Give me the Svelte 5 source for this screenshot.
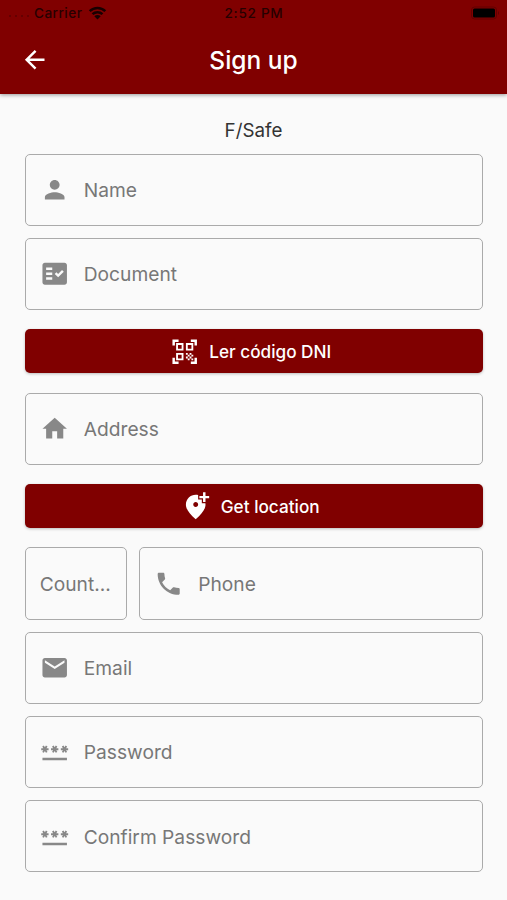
<script>
const icons = {
  back: 'M20 11H7.83l5.59-5.59L12 4l-8 8 8 8 1.41-1.41L7.83 13H20v-2z',
  person: 'M12 12c2.21 0 4-1.79 4-4s-1.79-4-4-4-4 1.79-4 4 1.79 4 4 4zm0 2c-2.67 0-8 1.34-8 4v2h16v-2c0-2.66-5.33-4-8-4z',
  document: 'M20 3H4c-1.1 0-2 .9-2 2v14c0 1.1.9 2 2 2h16c1.1 0 2-.9 2-2V5c0-1.1-.9-2-2-2zM10 17H5v-2h5v2zm0-4H5v-2h5v2zm0-4H5V7h5v2zm4.82 6L12 12.16l1.41-1.41 1.41 1.42L17.99 9l1.42 1.42L14.82 15z',
  home: 'M10 20v-6h4v6h5v-8h3L12 3 2 12h3v8z',
  phone: 'M6.62 10.79c1.44 2.83 3.76 5.14 6.59 6.59l2.2-2.2c.27-.27.67-.36 1.02-.24 1.12.37 2.33.57 3.57.57.55 0 1 .45 1 1V20c0 .55-.45 1-1 1-9.39 0-17-7.61-17-17 0-.55.45-1 1-1h3.5c.55 0 1 .45 1 1 0 1.25.2 2.45.57 3.57.11.35.03.74-.25 1.02l-2.2 2.2z',
  email: 'M20 4H4c-1.1 0-1.99.9-1.99 2L2 18c0 1.1.9 2 2 2h16c1.1 0 2-.9 2-2V6c0-1.1-.9-2-2-2zm0 4l-8 5-8-5V6l8 5 8-5v2z',
  password: 'M2 17h20v2H2v-2zm1.15-4.05L4 11.47l.85 1.48 1.3-.75-.85-1.48H7v-1.5H5.3l.85-1.47L4.85 7 4 8.47 3.15 7l-1.3.75.85 1.47H1v1.5h1.7l-.85 1.48 1.3.75zm6.7-.75l1.3.75.85-1.48.85 1.48 1.3-.75-.85-1.48H15v-1.5h-1.7l.85-1.47-1.3-.75L12 8.47 11.15 7l-1.3.75.85 1.47H9v1.5h1.7l-.85 1.48zM23 9.22h-1.7l.85-1.47-1.3-.75L20 8.47 19.15 7l-1.3.75.85 1.47H17v1.5h1.7l-.85 1.48 1.3.75.85-1.48.85 1.48 1.3-.75-.85-1.48H23v-1.5z',
  scanner: 'M9.5 6.5v3h-3v-3h3M11 5H5v6h6V5zm-1.5 9.5v3h-3v-3h3M11 13H5v6h6v-6zm6.5-6.5v3h-3v-3h3M19 5h-6v6h6V5zm-6 8h1.5v1.5H13V13zm1.5 1.5H16V16h-1.5v-1.5zM16 13h1.5v1.5H16V13zm-3 3h1.5v1.5H13V16zm1.5 1.5H16V19h-1.5v-1.5zM16 16h1.5v1.5H16V16zm1.5-1.5H19V16h-1.5v-1.5zm0 3H19V19h-1.5v-1.5zM22 7h-2V4h-3V2h5v5zm0 15v-5h-2v3h-3v2h5zM2 22h5v-2H4v-3H2v5zM2 2v5h2V4h3V2H2z',
  location: 'M20 1v3h3v2h-3v3h-2V6h-3V4h3V1h2zm-8 12c1.1 0 2-.9 2-2s-.9-2-2-2-2 .9-2 2 .9 2 2 2zm2-9.75V7h3v3h2.92c.05.4.08.79.08 1.2 0 3.32-2.67 7.25-8 11.8-5.33-4.55-8-8.48-8-11.8C4 6.22 7.8 3 12 3c.68 0 1.35.08 2 .25z',
};
</script>

{#snippet icon(name)}
  <svg class="icon" viewBox="0 0 24 24"><path d={icons[name]} /></svg>
{/snippet}

{#snippet field(label, name)}
  <div class="field">
    {#if name}
      {@render icon(name)}
    {/if}
    <span>{label}</span>
  </div>
{/snippet}

<header class="header">
  <div class="status">
    <div class="carrier">
      <svg class="signal" viewBox="0 0 22 4">
        <circle cx="2" cy="2" r="1" /><circle cx="8" cy="2" r="1" />
        <circle cx="14" cy="2" r="1" /><circle cx="20" cy="2" r="1" />
      </svg>
      <span>Carrier</span>
      <svg class="wifi" viewBox="0 0 18 14">
        <path d="M1.2 5.2a11.2 11.2 0 0 1 15.6 0M4 8.2a7.2 7.2 0 0 1 10 0" />
        <path class="dot" d="M9 13.6 5.8 10.3a4.6 4.6 0 0 1 6.4 0z" />
      </svg>
    </div>
    <span class="time">2:52 PM</span>
    <svg class="battery" viewBox="0 0 29 14">
      <rect class="shell" x=".5" y="1" width="25" height="12" rx="3" />
      <rect x="2" y="2.5" width="22" height="9" rx="1.5" />
      <path class="shell" d="M27.5 5.5v3" />
    </svg>
  </div>
  <div class="toolbar">
    {@render icon('back')}
    <h1>Sign up</h1>
  </div>
</header>

<main class="form">
  <p class="brand">F/Safe</p>
  {@render field('Name', 'person')}
  {@render field('Document', 'document')}
  <button class="action">{@render icon('scanner')}<span>Ler código DNI</span></button>
  {@render field('Address', 'home')}
  <button class="action">{@render icon('location')}<span>Get location</span></button>
  <div class="row">
    {@render field('Count...')}
    {@render field('Phone', 'phone')}
  </div>
  {@render field('Email', 'email')}
  {@render field('Password', 'password')}
  {@render field('Confirm Password', 'password')}
</main>

<style>
  :global(body) {
    margin: 0;
    background-color: #fafafa;
    font-family: Inter, "Liberation Sans", sans-serif;
  }

  .header {
    height: 93.5px;
    background-color: #800000;
    box-shadow: 0 1px 4px rgba(0, 0, 0, 0.4);
  }

  .status {
    display: grid;
    grid-template-columns: 1fr auto 1fr;
    align-items: center;
    height: 26px;
    padding: 0 7px 0 8px;
    color: #260000;
    font-size: 13.6px;
    font-weight: 500;
    letter-spacing: 0.45px;
  }

  .time {
    letter-spacing: 0.7px;
  }

  .carrier {
    display: flex;
    align-items: center;
  }

  .signal {
    width: 22px;
    height: 4px;
    margin: 6px 4px 0 0;
    fill: #5c0000;
  }

  .wifi {
    width: 19px;
    height: 14px;
    margin-left: 6px;
    fill: none;
    stroke: #180000;
    stroke-width: 2.5;
  }

  .wifi .dot {
    fill: #180000;
    stroke: none;
  }

  .battery {
    justify-self: end;
    width: 29px;
    height: 14px;
  }

  .battery .shell {
    fill: none;
    stroke: #620000;
  }

  .toolbar {
    display: grid;
    grid-template-columns: 1fr auto 1fr;
    align-items: center;
    height: 67.5px;
    padding: 0 20.3px;
    color: #fff;
  }

  h1 {
    margin: 0;
    font-size: 24.5px;
    font-weight: 500;
  }

  .icon {
    flex: none;
    width: 29.4px;
    height: 29.4px;
    fill: currentColor;
  }

  .form {
    display: flex;
    flex-direction: column;
    gap: 12.1px;
    padding: 24px 24.5px 0;
  }

  .brand {
    margin: 0 0 -12.1px;
    height: 36px;
    color: #333;
    font-size: 18.8px;
    line-height: 25px;
    text-align: center;
  }

  .field {
    display: flex;
    align-items: center;
    gap: 14.7px;
    box-sizing: border-box;
    height: 72.2px;
    padding: 0 14.2px;
    border: 1.3px solid #aaa;
    border-radius: 5px;
    color: #888;
    font-size: 19.2px;
  }

  .field span {
    padding-top: 0.6px;
    color: #777;
    white-space: nowrap;
  }

  .action {
    display: flex;
    align-items: center;
    justify-content: center;
    gap: 10px;
    height: 43.8px;
    margin: 7.3px 0;
    padding: 0 6px 0 0;
    border: 0;
    border-radius: 5px;
    background-color: #800000;
    box-shadow: 0 1px 3px rgba(0, 0, 0, 0.25);
    color: #fff;
    font-family: inherit;
    font-size: 17.2px;
    font-weight: 500;
  }

  .row {
    display: grid;
    grid-template-columns: 102.5px 1fr;
    gap: 12px;
  }
</style>
